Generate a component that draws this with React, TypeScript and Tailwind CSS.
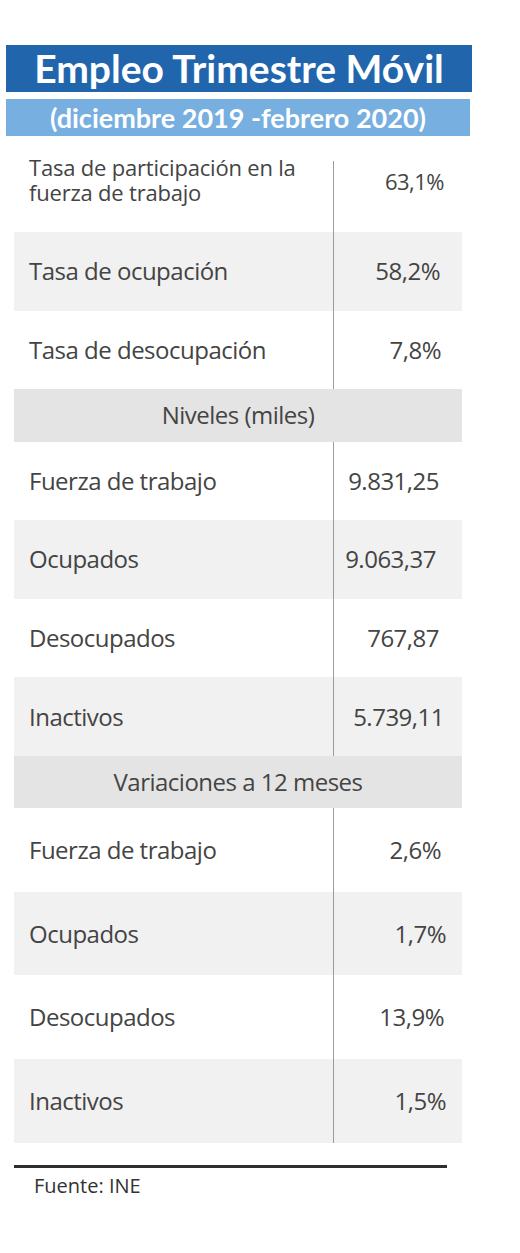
type Row = { label: string; value: string; pr: string; h: string; gray?: boolean };

const body = "font-['Open_Sans',sans-serif] tracking-[-0.5px]";

const seccion1: Row[] = [
  { label: 'Tasa de ocupación', value: '58,2%', pr: 'pr-[22px]', h: 'h-[78.5px]', gray: true },
  { label: 'Tasa de desocupación', value: '7,8%', pr: 'pr-[21px]', h: 'h-[78.5px]' },
];

const niveles: Row[] = [
  { label: 'Fuerza de trabajo', value: '9.831,25', pr: 'pr-[23px]', h: 'h-[78.6px]' },
  { label: 'Ocupados', value: '9.063,37', pr: 'pr-[26px]', h: 'h-[78.6px]', gray: true },
  { label: 'Desocupados', value: '767,87', pr: 'pr-[23px]', h: 'h-[78.6px]' },
  { label: 'Inactivos', value: '5.739,11', pr: 'pr-[18px]', h: 'h-[78.6px]', gray: true },
];

const variaciones: Row[] = [
  { label: 'Fuerza de trabajo', value: '2,6%', pr: 'pr-[21px]', h: 'h-[83.75px]' },
  { label: 'Ocupados', value: '1,7%', pr: 'pr-[16px]', h: 'h-[83.75px]', gray: true },
  { label: 'Desocupados', value: '13,9%', pr: 'pr-[18px]', h: 'h-[83.75px]' },
  { label: 'Inactivos', value: '1,5%', pr: 'pr-[16px]', h: 'h-[83.75px]', gray: true },
];

function DataRow({ row }: { row: Row }) {
  return (
    <div className={`flex ${row.h} ${row.gray ? 'bg-[#f1f1f1]' : 'bg-white'}`}>
      <div className="w-[319px] flex items-center pl-[15px] text-[24px] leading-[28px] text-[#444444]">
        {row.label}
      </div>
      <div
        className={`flex-1 flex items-center justify-end border-l border-[#9b9b9b] text-[24px] leading-[28px] text-[#444444] ${row.pr}`}
      >
        {row.value}
      </div>
    </div>
  );
}

function Header({ text, h }: { text: string; h: string }) {
  return (
    <div className={`${h} bg-[#e4e4e4] flex items-center justify-center text-[24px] leading-[28px] text-[#444444]`}>
      {text}
    </div>
  );
}

export default function App() {
  return (
    <div className="w-[520px] h-[1253px] bg-white pt-[45px]">
      <div className="ml-[6px] w-[466px] h-[47px] bg-[#2166ad] flex items-center justify-center font-['Lato',sans-serif] font-bold text-[39px] leading-none text-white">
        Empleo Trimestre Móvil
      </div>
      <div className="mt-[7px] ml-[6px] w-[464px] h-[37px] bg-[#77afe0] flex items-center justify-center font-['Lato',sans-serif] font-bold text-[27px] leading-none text-white">
        (diciembre 2019 -febrero 2020)
      </div>

      <div className={`mt-[18px] ml-[14px] w-[448px] ${body}`}>
        <div className="flex h-[78px] bg-white">
          <div className="w-[319px] pl-[15px] pt-[1px] text-[22px] tracking-[-0.2px] text-[#444444]">
            <div className="h-[25px] leading-[25px]">Tasa de participación en la</div>
            <div className="h-[25px] leading-[25px]">fuerza de trabajo</div>
          </div>
          <div className="flex-1 mt-[7px] flex items-start justify-end pt-[8px] pr-[18px] border-l border-[#9b9b9b] text-[22px] leading-[25px] text-[#444444]">
            63,1%
          </div>
        </div>
        {seccion1.map((r) => (
          <DataRow key={r.label} row={r} />
        ))}

        <Header text="Niveles (miles)" h="h-[52.5px]" />
        {niveles.map((r) => (
          <DataRow key={r.label} row={r} />
        ))}

        <Header text="Variaciones a 12 meses" h="h-[52px]" />
        {variaciones.map((r) => (
          <DataRow key={r.label} row={r} />
        ))}
      </div>

      <div className={`mt-[22px] ml-[14px] w-[433px] ${body}`}>
        <div className="h-[3px] bg-[#2e2e2e]" />
        <div className="mt-[6px] pl-[20px] text-[20px] leading-[24px] tracking-normal text-[#333333]">Fuente: INE</div>
      </div>
    </div>
  );
}
